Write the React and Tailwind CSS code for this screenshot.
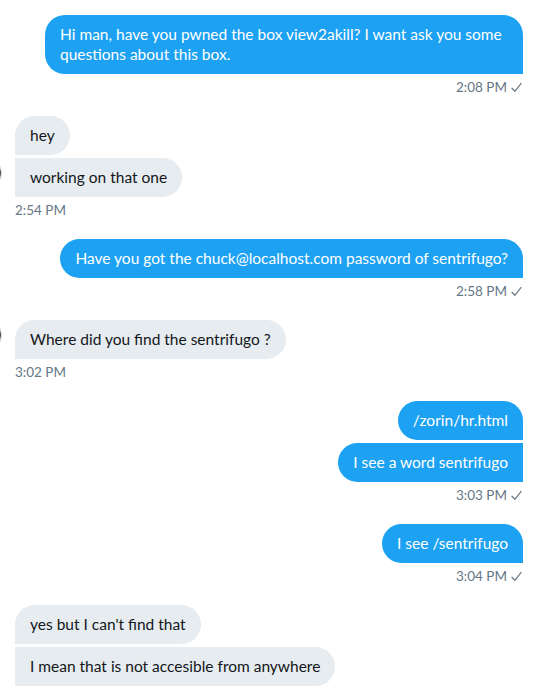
const groups = [
  { side: "right", msgs: ["Hi man, have you pwned the box view2akill? I want ask you some questions about this box."], time: "2:08 PM" },
  { side: "left", msgs: ["hey", "working on that one"], time: "2:54 PM", avatar: true },
  { side: "right", msgs: ["Have you got the chuck@localhost.com password of sentrifugo?"], time: "2:58 PM" },
  { side: "left", msgs: ["Where did you find the sentrifugo ?"], time: "3:02 PM", avatar: true },
  { side: "right", msgs: ["/zorin/hr.html", "I see a word sentrifugo"], time: "3:03 PM" },
  { side: "right", msgs: ["I see /sentrifugo"], time: "3:04 PM" },
  { side: "left", msgs: ["yes but I can't find that", "I mean that is not accesible from anywhere"], time: null },
];

function Bubble({ side, text, first }) {
  if (side === "right") {
    return (
      <div
        className={
          "bg-[#1da1f2] text-white px-[15px] pt-[9px] pb-[10px] leading-5 max-w-[478px] rounded-[20px] rounded-br-none " +
          (first ? "" : "rounded-tr-none")
        }
      >
        {text}
      </div>
    );
  }
  return (
    <div
      className={
        "bg-[#e6ecf0] text-[#14171a] px-[15px] pt-[9px] pb-[10px] leading-5 max-w-[478px] rounded-[20px] rounded-bl-none " +
        (first ? "" : "rounded-tl-none")
      }
    >
      {text}
    </div>
  );
}

export default function App() {
  return (
    <div className="w-[538px] h-[690px] overflow-hidden bg-white px-[15px] pt-[15px] text-[15.5px] font-['Lato',sans-serif]">
      {groups.map((g, i) => (
        <div key={i} className={"relative flex flex-col mb-[20px] " + (g.side === "right" ? "items-end" : "items-start")}>
          <div className={"relative flex flex-col gap-[3px] " + (g.side === "right" ? "items-end" : "items-start")}>
            {g.msgs.map((m, j) => (
              <Bubble key={j} side={g.side} text={m} first={j === 0} />
            ))}
            {g.avatar && (
              <div className="absolute left-[-45px] bottom-[8px] w-[32px] h-[32px] rounded-full bg-[#3a3f44] border border-[#dfe4e8]" />
            )}
          </div>
          {g.time && (
            <div className="mt-[4px] h-[18px] leading-[18px] text-[13.5px] text-[#657786] flex items-center gap-[3px]">
              <span>{g.time}</span>
              {g.side === "right" && (
                <svg width="13" height="13" viewBox="0 0 12 12" fill="none" stroke="#657786" strokeWidth="1.1">
                  <path d="M1.5 6.5 L4.5 9.5 L10.5 2" />
                </svg>
              )}
            </div>
          )}
        </div>
      ))}
    </div>
  );
}
